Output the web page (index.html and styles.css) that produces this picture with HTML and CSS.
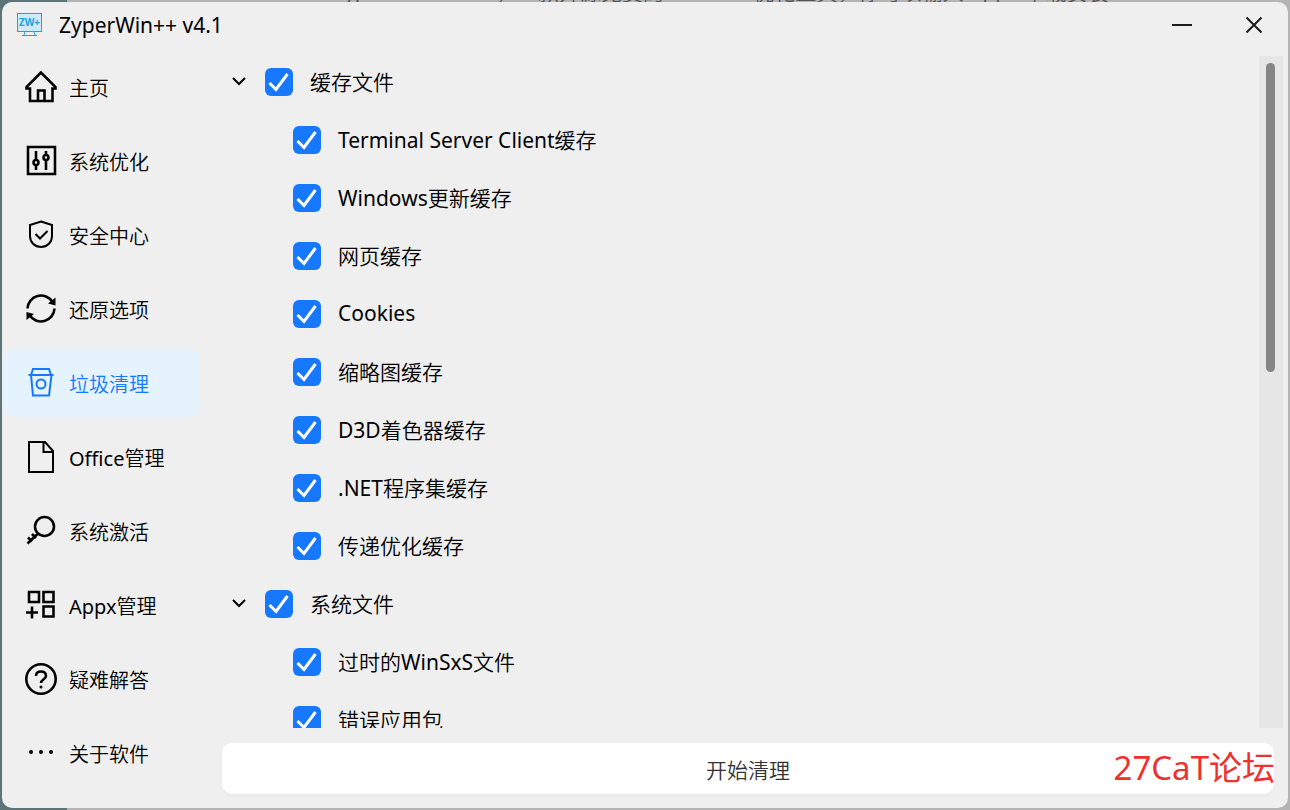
FILE: index.html
```
<!DOCTYPE html>
<html lang="zh-CN">
<head>
<meta charset="utf-8">
<title>ZyperWin++ v4.1</title>
<link rel="stylesheet" href="styles.css">
</head>
<body>

<div class="backdrop" aria-hidden="true">ZyperWin++ v4.1，一款开源免费的Windows优化工具，你可以输入 Appx 下载安装</div>

<div class="window">
    <header class="titlebar">
        <svg class="logo" viewBox="0 0 26 24" fill="none" stroke="#1ba1e6">
            <rect x="0.5" y="0.5" width="24" height="18" fill="#cfeafb"/>
            <path d="M8 19l-1 3M17 19l1 3M5 22.500h15"/>
            <text x="12.500" y="13" text-anchor="middle" class="logo-text">ZW+</text>
        </svg>
        <h1>ZyperWin++ v4.1</h1>
        <button type="button" class="win-btn" aria-label="最小化">
            <svg viewBox="0 0 20 20"><path d="M0 10h20"/></svg>
        </button>
        <button type="button" class="win-btn" aria-label="关闭">
            <svg viewBox="0 0 20 20"><path d="M2.500 2.500l15 15M17.500 2.500l-15 15"/></svg>
        </button>
    </header>

    <nav class="sidebar">
        <a href="#home">
            <svg class="icon" viewBox="0 0 32 32"><path d="M16 1.500L1.500 16v1.500H5V30h22.500V17.500h3V16zM13 30V19.500h6.500V30"/></svg>
            主页
        </a>
        <a href="#optimize">
            <svg class="icon" viewBox="0 0 32 32"><path d="M3 2h27v27H3zM11 6v9M11 20v5M21 6v4M21 15v10"/><circle cx="11" cy="17.500" r="2.500"/><circle cx="21" cy="12.500" r="2.500"/></svg>
            系统优化
        </a>
        <a href="#security">
            <svg class="icon thin" viewBox="0 0 32 32"><path d="M16 2.500L27 6v11c0 6-4.500 11-11 11S5 23 5 17V6zM10.500 15l4.500 4.500 7.500-7.500"/></svg>
            安全中心
        </a>
        <a href="#restore">
            <svg class="icon" viewBox="0 0 32 32"><path d="M2.500 15.500A13.500 13.500 0 0 1 27.500 9M29.500 15.500A13.500 13.500 0 0 1 4.500 22"/><path class="solid" d="M30.500 4.500v8l-7.500-2zM1.500 27v-8l7.500 2z"/></svg>
            还原选项
        </a>
        <a href="#clean" class="active">
            <svg class="icon thin" viewBox="0 0 32 32"><path d="M3.500 8h25M6 8l2-6h16l2 6M6 8l2 20.500h16L26.500 8"/><circle cx="16" cy="17" r="4.500"/></svg>
            垃圾清理
        </a>
        <a href="#office">
            <svg class="icon thin" viewBox="0 0 32 32"><path d="M4 1h16l8 9v21H4zM18.500 1v10h10"/></svg>
            Office管理
        </a>
        <a href="#activate">
            <svg class="icon" viewBox="0 0 32 32"><circle cx="19.500" cy="11.500" r="9.500"/><path d="M13 18.500L2.500 28.500M3 22.500l4 4M7 19l4 4"/></svg>
            系统激活
        </a>
        <a href="#appx">
            <svg class="icon" viewBox="0 0 32 32"><path d="M4 3h10v10H4zM18.500 3h10v10h-10zM18.500 17.500h10v10h-10zM1 23.500h12M7 17.500v12"/></svg>
            Appx管理
        </a>
        <a href="#help">
            <svg class="icon" viewBox="0 0 32 32"><circle cx="16" cy="16" r="14.700"/><path d="M11 13c0-3 2-4.500 5-4.500s5 1.500 5 4.500-5 3.500-5 7"/><circle class="dot" cx="16" cy="24" r="1.500"/></svg>
            疑难解答
        </a>
        <a href="#about">
            <svg class="icon" viewBox="0 0 32 32"><circle class="dot" cx="6" cy="15" r="2"/><circle class="dot" cx="16" cy="15" r="2"/><circle class="dot" cx="26" cy="15" r="2"/></svg>
            关于软件
        </a>
    </nav>

    <main class="content">
        <div class="tree-wrap">
            <ul class="tree">
                <li>
                    <div class="row">
                        <button type="button" class="toggle" aria-label="折叠"><svg viewBox="0 0 14 14"><path d="M1 4l6 6 6-6"/></svg></button>
                        <label><input type="checkbox" checked>缓存文件</label>
                    </div>
                    <ul class="children">
                        <li class="row"><label><input type="checkbox" checked>Terminal Server Client缓存</label></li>
                        <li class="row"><label><input type="checkbox" checked>Windows更新缓存</label></li>
                        <li class="row"><label><input type="checkbox" checked>网页缓存</label></li>
                        <li class="row"><label><input type="checkbox" checked>Cookies</label></li>
                        <li class="row"><label><input type="checkbox" checked>缩略图缓存</label></li>
                        <li class="row"><label><input type="checkbox" checked>D3D着色器缓存</label></li>
                        <li class="row"><label><input type="checkbox" checked>.NET程序集缓存</label></li>
                        <li class="row"><label><input type="checkbox" checked>传递优化缓存</label></li>
                    </ul>
                </li>
                <li>
                    <div class="row">
                        <button type="button" class="toggle" aria-label="折叠"><svg viewBox="0 0 14 14"><path d="M1 4l6 6 6-6"/></svg></button>
                        <label><input type="checkbox" checked>系统文件</label>
                    </div>
                    <ul class="children">
                        <li class="row"><label><input type="checkbox" checked>过时的WinSxS文件</label></li>
                        <li class="row"><label><input type="checkbox" checked>错误应用包</label></li>
                    </ul>
                </li>
            </ul>
            <div class="scrollbar"><div class="thumb"></div></div>
        </div>
        <div class="actions">
            <button type="button" class="start">开始清理</button>
            <span class="watermark">27CaT论坛</span>
        </div>
    </main>
</div>

</body>
</html>
```
FILE: styles.css
```
* {
    box-sizing: border-box;
}

body {
    display: flex;
    flex-direction: column;
    margin: 0;
    padding: 0 2px 2px;
    height: 100vh;
    overflow: hidden;
    background: linear-gradient(to right, #5d7577 67px, #b4b4b4 67px);
    font-family: "Noto Sans", "Noto Sans CJK SC DemiLight", "Noto Sans CJK SC Light", "Noto Sans CJK SC", sans-serif;
    color: #000;
}

ul {
    margin: 0;
    padding: 0;
    list-style: none;
}

button {
    padding: 0;
    border: 0;
    background: none;
    font: inherit;
}

/* page behind the window, only its lower edge shows */
.backdrop {
    display: flex;
    align-items: flex-end;
    height: 2px;
    padding-left: 330px;
    overflow: hidden;
    color: #555;
    font-size: 21px;
    line-height: 20px;
    white-space: nowrap;
}

.window {
    flex: 1;
    display: grid;
    grid-template-columns: 220px 1fr;
    grid-template-rows: 50px 1fr;
    min-height: 0;
    border-radius: 10px;
    background: #efefef;
    overflow: hidden;
}

/* title bar */
.titlebar {
    grid-column: 1 / 3;
    display: flex;
    align-items: center;
    padding: 0 8px 5px 15px;
}

.logo {
    width: 26px;
    height: 24px;
}

.logo-text {
    font-size: 10px;
    font-weight: bold;
    fill: #1ba1e6;
    stroke: none;
}

.titlebar h1 {
    flex: 1;
    margin: 0 0 0 16px;
    font-size: 21px;
    font-weight: normal;
}

.win-btn {
    display: flex;
    justify-content: center;
    width: 52px;
    margin-left: 20px;
}

.win-btn svg {
    width: 20px;
    height: 20px;
    fill: none;
    stroke: #1c1c1c;
    stroke-width: 2;
}

/* side navigation */
.sidebar {
    display: flex;
    flex-direction: column;
    gap: 6px;
    padding: 1px 22px 0 2px;
}

.sidebar a {
    display: flex;
    align-items: center;
    gap: 12px;
    height: 68px;
    padding-left: 21px;
    border-radius: 10px;
    color: #000;
    font-size: 20px;
    text-decoration: none;
}

.sidebar .active {
    background: #e5f3ff;
    color: #1677ff;
}

.icon {
    width: 32px;
    height: 32px;
    fill: none;
    stroke: currentColor;
    stroke-width: 8%;
}

.icon.thin {
    stroke-width: 2;
}

.icon .dot,
.icon .solid {
    fill: currentColor;
    stroke: none;
}

/* file tree */
.content {
    display: flex;
    flex-direction: column;
    min-width: 0;
    min-height: 0;
}

.tree-wrap {
    flex: 1;
    display: flex;
    min-height: 0;
    padding-right: 5px;
}

.tree {
    flex: 1;
    overflow: hidden;
    font-size: 21px;
}

.row {
    display: flex;
    align-items: center;
    gap: 19px;
    height: 58px;
    padding-left: 10px;
}

.children .row {
    padding-left: 71px;
}

.row label {
    display: flex;
    align-items: center;
    gap: 17px;
}

.toggle,
.toggle svg {
    display: block;
    width: 14px;
    height: 14px;
    fill: none;
    stroke: #000;
    stroke-width: 2;
}

.row input {
    appearance: none;
    width: 28px;
    height: 28px;
    margin: 2px 0 0;
    border-radius: 6px;
    background: #fff;
}

.row input:checked {
    background: #1677ff url("data:image/svg+xml,%3Csvg xmlns='http://www.w3.org/2000/svg' viewBox='0 0 28 28'%3E%3Cpath d='M4.500 15l6.500 6.500L22.500 6' fill='none' stroke='white' stroke-width='3'/%3E%3C/svg%3E");
}

.scrollbar {
    width: 24px;
    margin-top: 4px;
    padding: 7px 8px 7px 7px;
    background: #e6e6e6;
}

.thumb {
    height: 47%;
    border-radius: 5px;
    background: #858585;
}

/* bottom action */
.actions {
    position: relative;
    padding: 15px 14px 14px 0;
}

.start {
    display: block;
    width: 100%;
    height: 51px;
    border-radius: 10px;
    background: #fff;
    box-shadow: 0 3px 0 #eaeaea;
    color: #333;
    font-size: 21px;
}

.watermark {
    position: absolute;
    right: 13px;
    bottom: 20px;
    color: #ee3130;
    font-family: "Noto Sans", "Noto Sans CJK SC", sans-serif;
    font-size: 33px;
    line-height: 40px;
    pointer-events: none;
}
```
